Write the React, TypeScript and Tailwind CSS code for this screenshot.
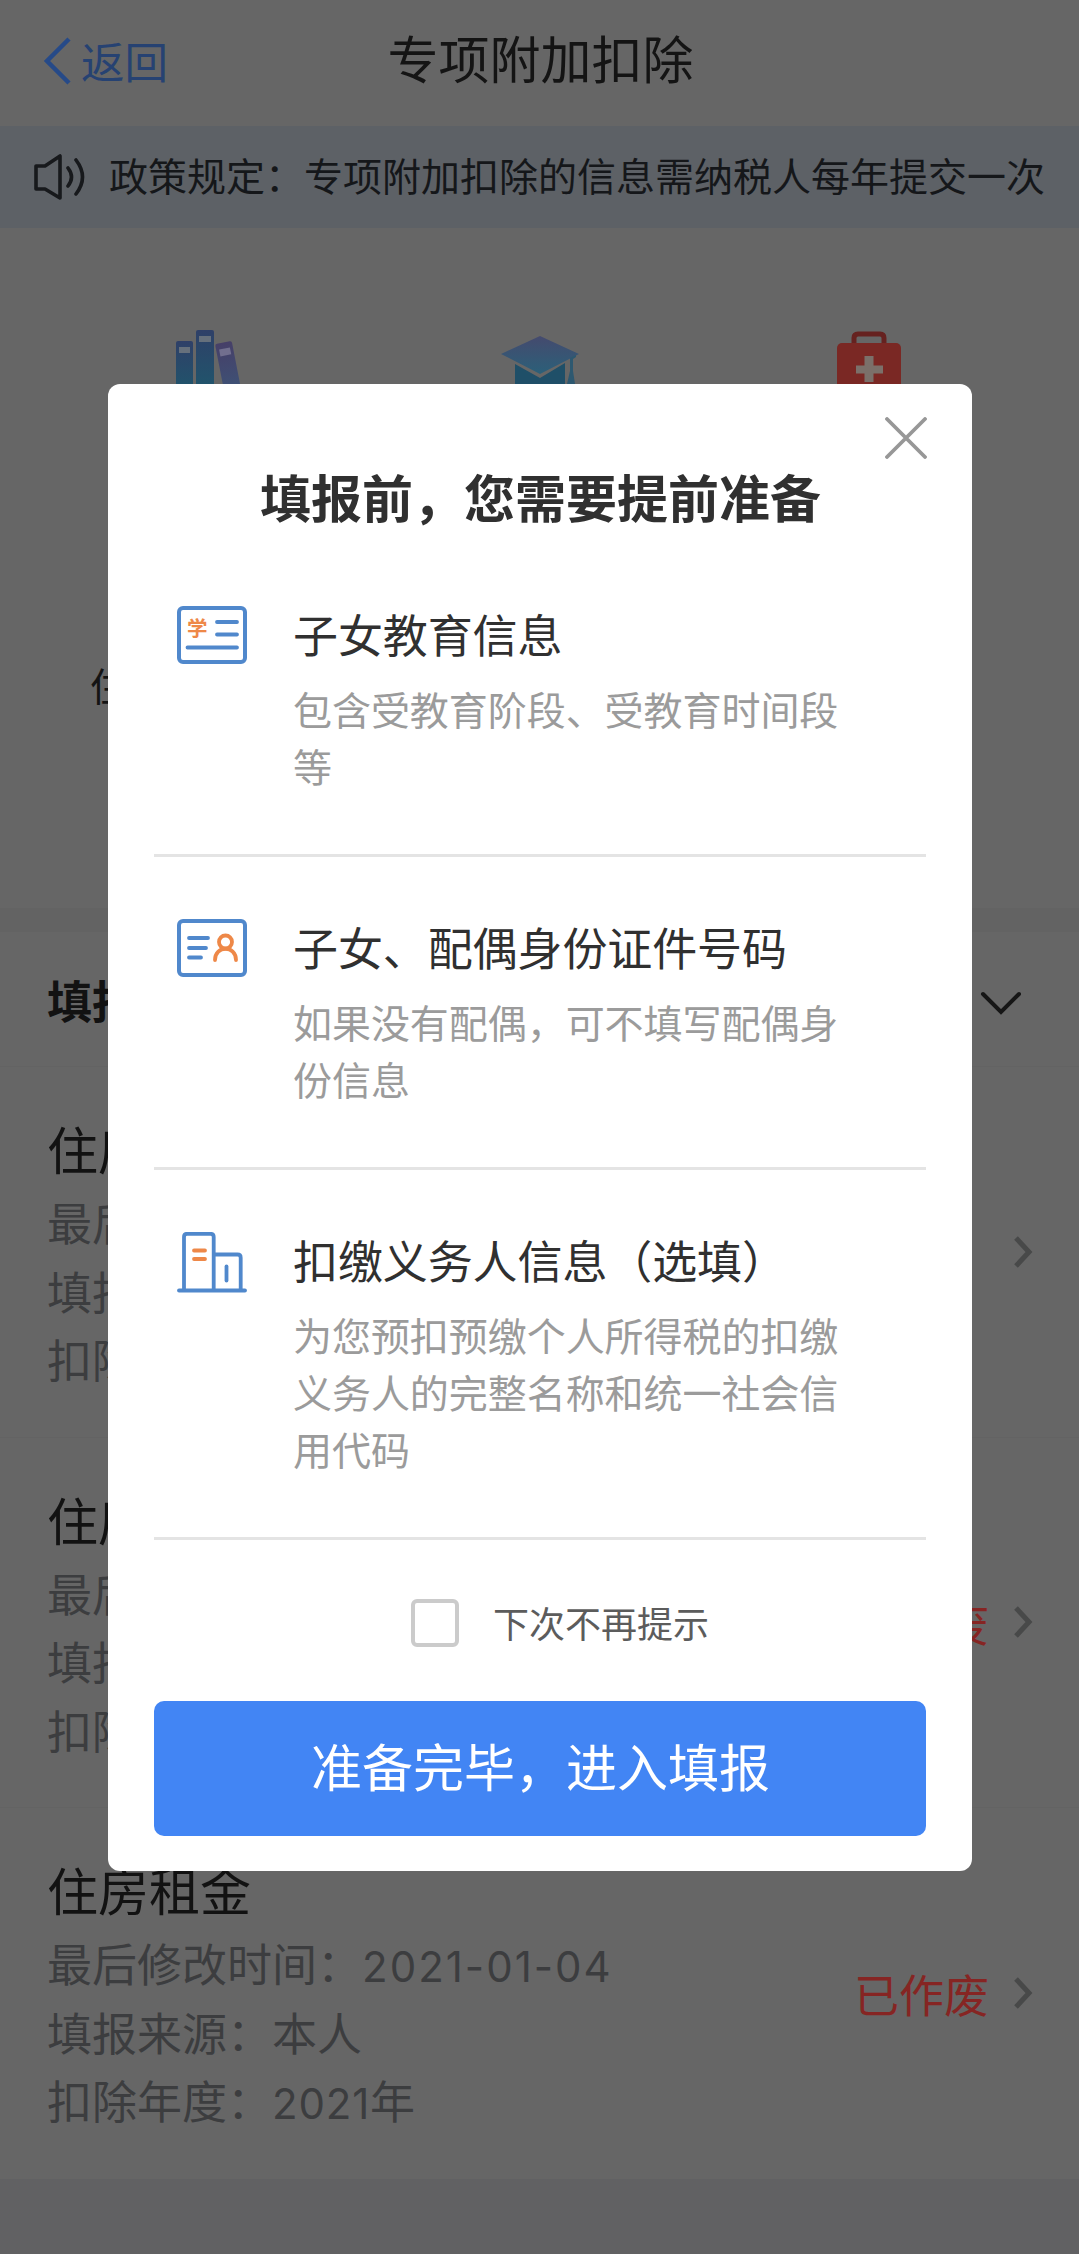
import { ReactNode } from "react";
import { clsx } from "clsx";

interface PrepareItemProps {
  icon: ReactNode;
  title: string;
  description: string;
}

interface RecordItemProps {
  title: string;
  date: string;
  source: string;
  year: string;
  status?: string;
  last?: boolean;
}

const BooksIcon = () => (
  <svg width="70" height="80" viewBox="0 0 70 80" fill="none">
    <defs>
      <linearGradient id="books" x1="0" y1="0" x2="0" y2="1">
        <stop offset="0" stopColor="#2f4068" />
        <stop offset="0.800" stopColor="#1f566c" />
      </linearGradient>
      <linearGradient id="book-tilt" x1="0" y1="0" x2="0" y2="1">
        <stop offset="0" stopColor="#463f68" />
        <stop offset="1" stopColor="#3b587a" />
      </linearGradient>
    </defs>
    <rect x="2" y="11" width="17" height="66" rx="2" fill="url(#books)" />
    <rect x="5" y="17" width="11" height="6" fill="#66707c" />
    <rect x="22" y="0" width="18" height="77" rx="2" fill="url(#books)" />
    <rect x="25" y="6" width="12" height="6" fill="#66707c" />
    <g transform="rotate(-11 42 14)">
      <rect x="41" y="14" width="17" height="64" rx="2" fill="url(#book-tilt)" />
      <rect x="44" y="20" width="11" height="7" fill="#716f8e" />
    </g>
  </svg>
);

const CapIcon = () => (
  <svg width="80" height="80" viewBox="0 0 80 80" fill="none">
    <defs>
      <linearGradient id="cap" x1="0" y1="0" x2="0" y2="1">
        <stop offset="0" stopColor="#454a6e" />
        <stop offset="1" stopColor="#2b6079" />
      </linearGradient>
    </defs>
    <path d="M15 34v20c8 12 42 12 50 0V33L40 48 15 34z" fill="#1f4f68" />
    <path d="M40 6 79 24 40 44 1 24 40 6z" fill="url(#cap)" />
    <path d="M76 25 70 28v13l-3 13h8l-2-13V29l3-2v-2z" fill="#2d5870" />
  </svg>
);

const MedicalIcon = () => (
  <svg width="66" height="80" viewBox="0 0 66 80" fill="none" className="-ml-1">
    <path d="M18 13V8q0-4 4-4h22q4 0 4 4v5" stroke="#662220" strokeWidth="5" />
    <rect x="1" y="13" width="64" height="60" rx="5" fill="#7a2824" />
    <path d="M28.500 26h9v9.500H47v8h-9.500V52h-9v-8.500H20v-8h8.500V26z" fill="#7b706a" />
  </svg>
);

const SpeakerIcon = () => (
  <svg width="54" height="46" viewBox="0 0 54 46" fill="none" stroke="#17191c" strokeWidth="3.600">
    <path d="M2 12h9L26 2v42L11 35H2V12z" strokeLinejoin="round" />
    <path d="M34 14q7 9 0 18M42 6q13 17 0 34" strokeLinecap="round" />
  </svg>
);

const ArrowRight = () => (
  <svg width="20" height="32" viewBox="0 0 20 32" fill="none">
    <path d="M3 2l13 14L3 30" stroke="#484949" strokeWidth="5" />
  </svg>
);

const EducationIcon = () => (
  <svg width="70" height="58" viewBox="0 0 70 58" fill="none">
    <rect x="2" y="2" width="66" height="54" rx="4" stroke="#5088cc" strokeWidth="4" />
    <text x="10" y="29.500" fontSize="20.500" fontWeight="700" fill="#ee8848">学</text>
    <path d="M40 16h20M40 28.500h20M10.500 41.500H60" stroke="#5088cc" strokeWidth="3.800" strokeLinecap="round" />
  </svg>
);

const IdCardIcon = () => (
  <svg width="70" height="58" viewBox="0 0 70 58" fill="none">
    <rect x="2" y="2" width="66" height="54" rx="4" stroke="#5088cc" strokeWidth="4" />
    <path d="M12 19h19M12 29h17M12 38.500h12" stroke="#5088cc" strokeWidth="3.800" strokeLinecap="round" />
    <circle cx="48.500" cy="23" r="6.500" stroke="#ee8848" strokeWidth="3.800" />
    <path d="M38 41c0-15 21-15 21 0" stroke="#ee8848" strokeWidth="3.800" strokeLinecap="round" />
  </svg>
);

const CompanyIcon = () => (
  <svg width="70" height="61" viewBox="0 0 70 61" fill="none" stroke="#5088cc" strokeWidth="3.800" strokeLinecap="round">
    <path d="M2 58.500h66" />
    <path d="M7 58V5q0-3.200 3.200-3.200h23.300q3.200 0 3.200 3.200v53M37 22.500h23.500q3.200 0 3.200 3.200V58" />
    <path d="M49.500 34.500v14" />
    <path d="M17 18.500h11M17 27h11" stroke="#ee8848" />
  </svg>
);

const PrepareItem: React.FC<PrepareItemProps> = ({ icon, title, description }) => (
  <div className="flex gap-[46px] border-b-[3px] border-[#e4e4e4] pt-[60px] pb-[60.500px] pl-[23px]">
    <div className="w-[69px] shrink-0 pt-[2px]">{icon}</div>
    <div className="w-[560px] pl-px">
      <h3 className="text-[45px] leading-[60px] tracking-[-0.100px] text-[#303030]">{title}</h3>
      <p className="mt-[15.500px] text-[39px] leading-[57px] tracking-[-0.050px] text-[#9b9b9b]">
        {description}
      </p>
    </div>
  </div>
);

const RecordItem: React.FC<RecordItemProps> = ({ title, date, source, year, status, last }) => (
  <div
    className={clsx(
      "flex h-[370.500px] items-center justify-between pr-[46px] pl-[47px]",
      !last && "border-b border-[#636363]"
    )}
  >
    <div className="self-start pt-[47px]">
      <h3 className="text-[51px] leading-[68px] text-[#121212]">{title}</h3>
      <div className="mt-[6px] text-[45px] leading-[68.500px] text-[#3c3d3f]">
        <p className="h-[68.500px]">
          最后修改时间：
          <span className="font-[Inter] text-[42px] leading-none tracking-[2px]">{date}</span>
        </p>
        <p className="h-[68.500px]">填报来源：{source}</p>
        <p className="h-[68.500px]">
          扣除年度：
          <span className="font-[Inter] text-[42px] leading-none tracking-[0.800px]">{year}</span>年
        </p>
      </div>
    </div>
    <div className="flex items-center gap-6">
      {status && <span className="text-[45px] text-[#862523]">{status}</span>}
      <ArrowRight />
    </div>
  </div>
);

export default function App() {
  return (
    <div className="relative flex h-[2254px] w-[1079px] flex-col overflow-hidden bg-[#666666] font-['Noto_Sans_CJK_SC',sans-serif]">
      <header className="grid h-[126px] shrink-0 grid-cols-[1fr_auto_1fr] items-center pb-3 pl-[43px]">
        <button className="flex items-center gap-[10px] pt-2 text-[43.500px] leading-none text-[#264272]">
          <svg width="28" height="48" viewBox="0 0 28 48" fill="none">
            <path d="M26 2 4 24l22 22" stroke="#264a88" strokeWidth="4.500" />
          </svg>
          返回
        </button>
        <h1 className="-ml-[41px] text-[51px] leading-[68px] text-[#141414]">专项附加扣除</h1>
      </header>

      <div className="flex h-[102px] shrink-0 items-center bg-[#5d6166] pl-[34px]">
        <SpeakerIcon />
        <p className="ml-[21px] pb-[6px] text-[39px] leading-[56px] whitespace-nowrap text-[#15171a]">
          政策规定：专项附加扣除的信息需纳税人每年提交一次
        </p>
      </div>

      <div className="h-[680px] shrink-0 px-[43px] pt-[102px]">
        <div className="grid grid-cols-3 justify-items-center">
          <BooksIcon />
          <CapIcon />
          <MedicalIcon />
        </div>
        <div className="mt-[246px] grid grid-cols-3 justify-items-center text-[39px] leading-[56px] text-[#141414]">
          <span className="-ml-[3px]">住房贷款利息</span>
        </div>
      </div>

      <div className="h-6 shrink-0 bg-[#636363]" />

      <div className="flex h-[135px] shrink-0 items-center justify-between border-b border-[#636363] pt-[2px] pr-[57px] pl-[47px]">
        <h2 className="text-[45px] font-bold text-[#121212]">填报记录</h2>
        <svg width="42" height="26" viewBox="0 0 42 26" fill="none" className="mt-2">
          <path d="M3 3l18 18L39 3" stroke="#161616" strokeWidth="4" strokeLinecap="round" />
        </svg>
      </div>

      <RecordItem title="住房租金" date="2021-01-04" source="本人" year="2021" />
      <RecordItem title="住房租金" date="2021-01-04" source="本人" year="2021" status="已作废" />
      <RecordItem title="住房租金" date="2021-01-04" source="本人" year="2021" status="已作废" last />
      <div className="flex-1 bg-[#616163]" />

      <div className="absolute top-[384px] left-[108px] h-[1487px] w-[864px] rounded-xl bg-white px-[46px] pt-[76px]">
        <button className="absolute top-[33px] right-[45px]">
          <svg width="42" height="42" viewBox="0 0 42 42" fill="none">
            <path d="M2 2l38 38M40 2 2 40" stroke="#979797" strokeWidth="3.800" strokeLinecap="round" />
          </svg>
        </button>
        <h2 className="mb-3 pl-px text-center text-[51px] leading-[72px] font-bold text-[#303030]">
          填报前，您需要提前准备
        </h2>

        <PrepareItem
          icon={<EducationIcon />}
          title="子女教育信息"
          description="包含受教育阶段、受教育时间段等"
        />
        <PrepareItem
          icon={<IdCardIcon />}
          title="子女、配偶身份证件号码"
          description="如果没有配偶，可不填写配偶身份信息"
        />
        <PrepareItem
          icon={<CompanyIcon />}
          title="扣缴义务人信息（选填）"
          description="为您预扣预缴个人所得税的扣缴义务人的完整名称和统一社会信用代码"
        />

        <label className="mt-[59px] flex h-12 items-center gap-[34px] pl-[257px]">
          <span className="size-12 rounded-md border-4 border-[#cbcbcb]" />
          <span className="pb-[3px] text-[36px] leading-[44px] text-[#5c5c5c]">下次不再提示</span>
        </label>

        <button className="mt-[54px] h-[135px] w-full rounded-[10px] bg-[#4285f4] pb-[7px] pl-px text-[51px] text-white">
          准备完毕，进入填报
        </button>
      </div>
    </div>
  );
}
